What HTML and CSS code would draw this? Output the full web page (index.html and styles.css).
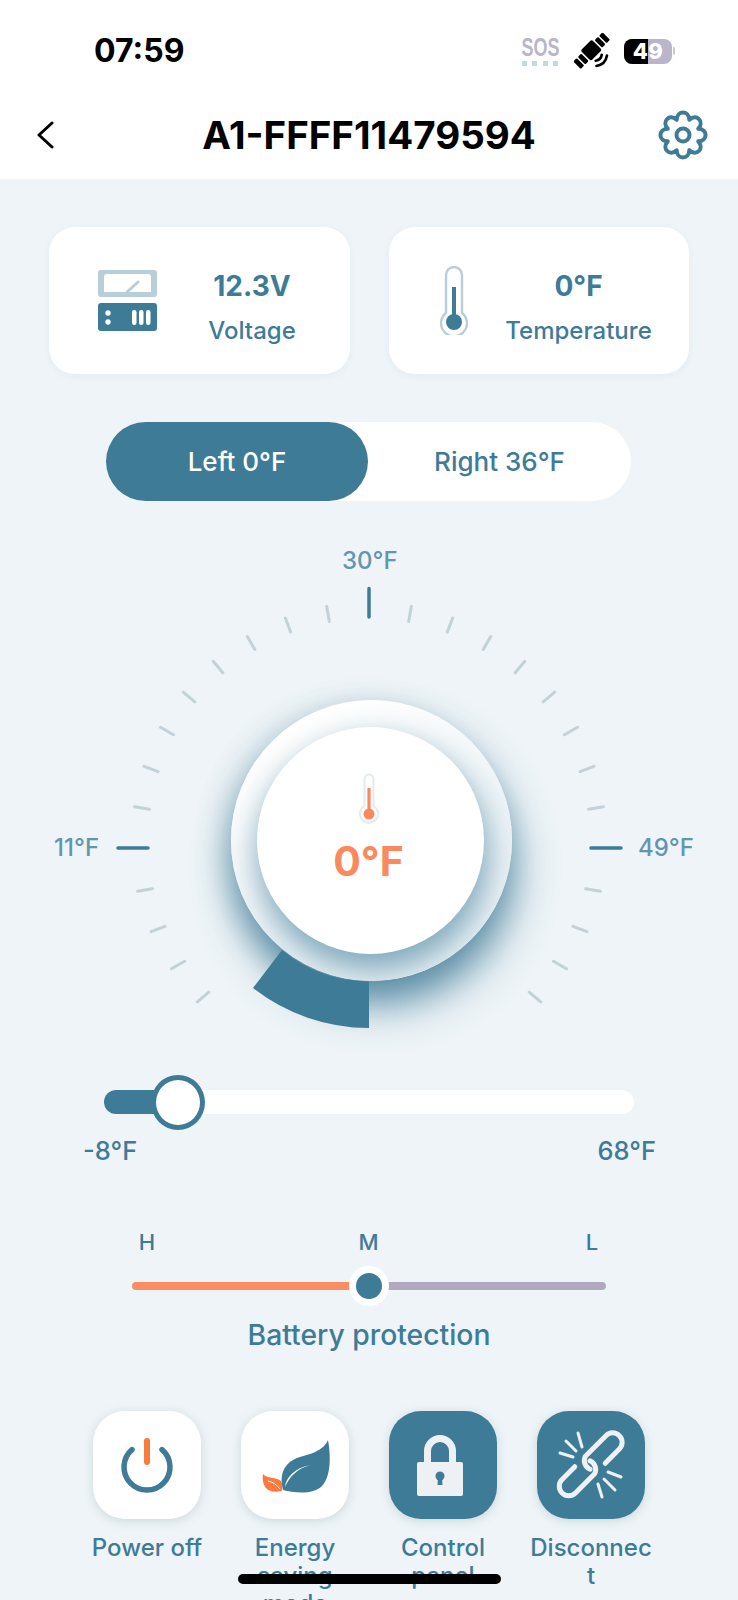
FILE: index.html
```html
<!DOCTYPE html>
<html lang="en">
<head>
<meta charset="utf-8">
<title>A1-FFFF11479594</title>
<link rel="stylesheet" href="styles.css">
</head>
<body>
<div class="screen">
  <header class="header">
    <div class="status">
      <span class="time">07:59</span>
      <div class="status-right">
        <div class="sos">
          <span class="sos-text">SOS</span>
          <div class="sos-dots"><i></i><i></i><i></i><i></i></div>
        </div>
        <svg class="sat" viewBox="-17 -17 34 34" width="36" height="36">
          <g transform="rotate(-45)">
            <rect x="-7.500" y="-8" width="15" height="14" rx="2"/>
            <rect x="9" y="-5.500" width="4.500" height="10" rx="1"/>
            <rect x="15" y="-5.500" width="4.500" height="10" rx="1"/>
            <rect x="-13.500" y="-5.500" width="4.500" height="10" rx="1"/>
            <rect x="-19.500" y="-5.500" width="4.500" height="10" rx="1"/>
            <path class="sat-wave" d="M-4 9Q0 12 4 9M-7 13Q0 18 7 13"/>
          </g>
        </svg>
        <div class="battery">
          <div class="battery-body"><span class="battery-fill"></span><span class="battery-num">49</span></div>
          <span class="battery-nub"></span>
        </div>
      </div>
    </div>
    <nav class="nav">
      <svg class="back" viewBox="0 0 18 28" width="18" height="28"><path d="M16 2L3 14L16 26"/></svg>
      <h1 class="title">A1-FFFF11479594</h1>
      <svg class="gear" viewBox="-25 -25 50 50" width="50" height="50">
        <path d="M-6.310 -15.240C-6 -25 6 -25 6.310 -15.240C13.400 -21.900 21.900 -13.400 15.240 -6.310C25 -6 25 6 15.240 6.310C21.900 13.400 13.400 21.900 6.310 15.240C6 25 -6 25 -6.310 15.240C-13.400 21.900 -21.900 13.400 -15.240 6.310C-25 6 -25 -6 -15.240 -6.310C-21.900 -13.400 -13.400 -21.900 -6.310 -15.240Z"/>
        <circle r="6.500"/>
      </svg>
    </nav>
  </header>

  <main class="main">
    <section class="cards">
      <div class="card card-volt">
        <svg viewBox="0 0 59 61" width="59" height="61">
          <rect class="pale" width="59" height="27" rx="3"/>
          <path class="window" d="M9 4H50Q53 4 53 7V22H6V7Q6 4 9 4Z"/>
          <path class="needle" d="M29 22L40 12"/>
          <rect class="ink" y="33" width="59" height="28" rx="3"/>
          <circle class="window" cx="10" cy="43" r="2.700"/>
          <circle class="window" cx="10" cy="52" r="2.700"/>
          <rect class="window" x="34" y="40" width="4.500" height="15" rx="2.200"/>
          <rect class="window" x="41" y="40" width="4.500" height="15" rx="2.200"/>
          <rect class="window" x="48" y="40" width="4.500" height="15" rx="2.200"/>
        </svg>
        <div class="card-text"><b class="value">12.3V</b><span class="label">Voltage</span></div>
      </div>
      <div class="card card-temp">
        <svg viewBox="0 0 28 69" width="28" height="69">
          <path class="tube" d="M6 47V9A8 8 0 0 1 22 9V47A13 13 0 1 1 6 47Z"/>
          <rect class="ink" x="12" y="21" width="4" height="35"/>
          <circle class="ink" cx="14" cy="56" r="8"/>
        </svg>
        <div class="card-text"><b class="value">0°F</b><span class="label">Temperature</span></div>
      </div>
    </section>

    <div class="toggle">
      <span class="toggle-item toggle-on">Left 0°F</span>
      <span class="toggle-item">Right 36°F</span>
    </div>

    <section class="dial">
      <svg class="dial-svg" viewBox="0 520 738 540" width="738" height="540">
        <g id="ticks">
          <path class="tick" d="M326.7 606.6L329.3 621.4M285.4 618L290.6 632M247.3 636.5L254.8 649.5M213.2 661.3L222.8 672.8M183.3 692.2L194.8 701.8M160.5 727.3L173.5 734.8M144 766.4L158 771.6M134.6 806.7L149.4 809.3M137.6 891.3L152.4 888.7M151 931.6L165 926.4M171.5 968.8L184.5 961.3M197.3 1001.8L208.8 992.200"/>
        </g>
        <use href="#ticks" transform="translate(738 0) scale(-1 1)"/>
        <path class="tick-major" d="M369 588.500V617M118 848H148M591 848H621"/>
      </svg>
      <span class="dial-label dial-top">30°F</span>
      <span class="dial-label dial-left">11°F</span>
      <span class="dial-label dial-right">49°F</span>
      <div class="knob">
        <div class="knob-inner">
          <svg class="knob-therm" viewBox="0 0 20 52" width="20" height="52">
            <path class="tube-light" d="M5.500 33V6A4.500 4.500 0 0 1 14.500 6V33A9 9 0 1 1 5.500 33Z"/>
            <rect class="hot" x="8.400" y="15" width="3.200" height="26"/>
            <circle class="hot" cx="10" cy="41" r="5.500"/>
          </svg>
          <span class="knob-value">0°F</span>
        </div>
      </div>
      <svg class="dial-arc" viewBox="0 520 738 540" width="738" height="540">
        <path class="ink" d="M369 1028A188 188 0 0 1 253 988L282 950A141 141 0 0 0 369 981.500Z"/>
      </svg>
    </section>

    <div class="range">
      <div class="range-fill"></div>
      <div class="range-thumb"></div>
    </div>
    <div class="range-labels"><span>-8°F</span><span>68°F</span></div>

    <div class="level-labels"><span>H</span><span>M</span><span>L</span></div>
    <div class="level">
      <span class="level-hot"></span>
      <span class="level-cool"></span>
      <span class="level-thumb"></span>
    </div>
    <div class="level-title">Battery protection</div>

    <section class="actions">
      <div class="action">
        <div class="action-btn">
          <svg viewBox="0 0 108 108" width="108" height="108">
            <path class="power-ring" d="M39 38.600A23 23 0 1 0 69 38.600"/>
            <path class="power-bar" d="M54 30V51"/>
          </svg>
        </div>
        <span class="action-label">Power off</span>
      </div>
      <div class="action">
        <div class="action-btn">
          <svg viewBox="0 0 108 108" width="108" height="108">
            <path class="ink" d="M42 79C38 64 43 54 52 49C62 43 80 44 87 29C90 45 90 66 81 75C72 84 54 82 42 79Z"/>
            <path class="window" d="M44 76C45 66 54 57 69 54C56 58 49 65 44 76Z"/>
            <path class="hot-deep" d="M22 63C26 68 36 66 40 70C42 73 41 78 41 80C33 82 27 80 24 76C22 72 21 68 22 63Z"/>
            <path class="window-thin" d="M27 70C32 71 36 74 39 78"/>
          </svg>
        </div>
        <span class="action-label">Energy saving mode</span>
      </div>
      <div class="action">
        <div class="action-btn action-on">
          <svg viewBox="0 0 108 108" width="108" height="108">
            <path class="shackle" d="M38.500 54V40A12.500 12.500 0 0 1 63.500 40V54"/>
            <rect class="frost" x="28" y="51" width="46" height="34" rx="2"/>
            <circle class="ink" cx="51" cy="65" r="4.500"/>
            <path class="ink" d="M49 66L48.500 74H53.500L53 66Z"/>
          </svg>
        </div>
        <span class="action-label">Control panel</span>
      </div>
      <div class="action">
        <div class="action-btn action-on">
          <svg viewBox="537 1411 108 108" width="108" height="108">
            <g transform="translate(590 1465) rotate(-45)">
              <path class="chain" d="M12 9.500H32A9.500 9.500 0 0 0 32 -9.500H3A9.500 9.500 0 0 0 -3 3"/>
              <path class="chain" d="M-12 -9.500H-30A9.500 9.500 0 0 0 -30 9.500H-3A9.500 9.500 0 0 0 3 -3"/>
            </g>
            <path class="spark" d="M560 1453L573 1457M566 1441L576 1451M578 1433L582 1447M608 1472L621 1477M604 1479L615 1490M598 1484L602 1497"/>
          </svg>
        </div>
        <span class="action-label">Disconnect</span>
      </div>
    </section>
  </main>
  <div class="home-bar"></div>
</div>
</body>
</html>
```

FILE: styles.css
```css
* { box-sizing: border-box; }
html, body { margin: 0; padding: 0; height: 1600px; overflow: hidden; }
body { background: #eef4f7; color: #3e7b97; font-family: Inter, "Noto Sans", sans-serif; font-weight: 500; }
.screen { position: relative; width: 738px; height: 1600px; overflow: hidden; }
svg { display: block; }

/* header */
.header { background: #fff; height: 179px; }
.status { height: 94px; padding: 8px 63px 0 94px; display: flex; align-items: center; justify-content: space-between; }
.time { color: #000; font-size: 32px; font-weight: 700; line-height: 36px; }
.status-right { display: flex; align-items: center; width: 155px; }
.sos { width: 40px; margin-right: 14px; display: flex; flex-direction: column; align-items: center; }
.sos-text { font-family: "Liberation Sans", sans-serif; font-size: 25px; line-height: 22px; font-weight: 700; color: #b9b6ca; transform: scaleX(.72); }
.sos-dots { display: flex; gap: 5.500px; margin-top: 3px; }
.sos-dots i { width: 5px; height: 5px; background: #c4d8df; }
.sat { margin-right: 14px; fill: #000; }
.sat-wave { fill: none; stroke: #000; stroke-width: 2.500; stroke-linecap: round; }
.battery { display: flex; align-items: center; }
.battery-body { position: relative; width: 48px; height: 25px; border-radius: 8px; background: #b9b6ca; overflow: hidden; display: flex; align-items: center; justify-content: center; }
.battery-fill { position: absolute; left: 0; top: 0; bottom: 0; width: 24px; background: #000; }
.battery-num { position: relative; color: #fff; font-size: 22px; font-weight: 800; line-height: 25px; letter-spacing: 0.500px; }
.battery-nub { width: 2px; height: 8px; margin-left: 1px; border-radius: 0 2px 2px 0; background: #c9c6d6; }

.nav { height: 80px; padding: 2px 30px 0 36px; display: flex; align-items: center; justify-content: space-between; position: relative; }
.back path { fill: none; stroke: #000; stroke-width: 3; stroke-linecap: round; stroke-linejoin: round; }
.title { margin: 0; position: absolute; left: 0; right: 0; text-align: center; color: #000; font-size: 38.500px; line-height: 44px; font-weight: 700; }
.gear { fill: none; stroke: #3e7b97; stroke-width: 4; stroke-linejoin: round; }

/* cards */
.cards { display: flex; gap: 39px; padding: 48px 49px 0; }
.card { width: 300.500px; height: 147px; border-radius: 26px; background: #fff; display: flex; align-items: center; box-shadow: 0 2px 6px rgba(190, 210, 220, .18); }
.card-volt { padding-left: 49px; gap: 15px; }
.card-temp { padding-left: 51px; gap: 31px; }
.card-text { width: 160px; padding-top: 16px; display: flex; flex-direction: column; align-items: center; gap: 11px; }
.value { font-size: 28px; line-height: 34px; font-weight: 700; }
.label { font-size: 24px; line-height: 34px; }
.pale { fill: #b8ced8; }
.window { fill: #fff; }
.needle { stroke: #b8ced8; stroke-width: 3; fill: none; stroke-linecap: round; }
.ink { fill: #3e7b97; }
.tube { fill: #fff; stroke: #b8ced8; stroke-width: 2.400; }

/* toggle */
.toggle { margin: 48px 107px 0 106px; height: 79px; border-radius: 40px; background: #fff; display: flex; font-size: 26px; }
.toggle-item { flex: 1; display: flex; align-items: center; justify-content: center; border-radius: 40px; }
.toggle-on { flex: 0 0 262px; background: #3e7b97; color: #fff; }

/* dial: a free canvas of ticks round the knob */
.dial { position: relative; margin-top: 19px; height: 540px; }
.dial-svg, .dial-arc { position: absolute; left: 0; top: 0; }
.tick { fill: none; stroke: #c3d2d9; stroke-width: 3; stroke-linecap: round; }
.tick-major { fill: none; stroke: #3e7b97; stroke-width: 3.500; stroke-linecap: round; }
.dial-label { position: absolute; color: #6396ae; font-size: 24px; line-height: 28px; }
.dial-top { left: 342px; top: 27px; }
.dial-left { left: 54px; top: 314px; }
.dial-right { left: 638px; top: 314px; }
.knob { position: absolute; left: 231px; top: 180px; width: 281px; height: 281px; border-radius: 50%; background: linear-gradient(150deg, #fff 15%, #eef4f7 60%, #e6eff3 100%); box-shadow: 4px 26px 40px -2px rgba(62, 123, 151, .8), -7px 8px 30px -2px rgba(62, 123, 151, .38); overflow: hidden; }
.knob-inner { position: absolute; left: 26px; top: 27px; width: 227px; height: 227px; border-radius: 50%; background: #fff; box-shadow: 2px 14px 30px 2px rgba(62, 123, 151, .62); display: flex; flex-direction: column; align-items: center; padding: 46px 4px 0 0; }
.knob-value { margin-top: 12px; font-size: 41px; line-height: 48px; font-weight: 700; color: #fa8a5e; }
.tube-light { fill: #fff; stroke: #e3ebef; stroke-width: 2; }
.hot { fill: #fa8a5e; }

/* temperature range */
.range { position: relative; margin: 30px 104px 0; height: 24px; border-radius: 12px; background: #fff; }
.range-fill { width: 73px; height: 24px; border-radius: 12px 0 0 12px; background: #3e7b97; }
.range-thumb { position: absolute; left: 47px; top: -15px; width: 54px; height: 55px; border-radius: 50%; background: #fff; border: 5px solid #3e7b97; }
.range-labels { margin-top: 23px; padding: 0 82px 0 83px; display: flex; justify-content: space-between; font-size: 25.500px; line-height: 28px; }

/* battery protection */
.level-labels { margin: 63px 126px 0 127px; display: flex; justify-content: space-between; font-size: 22px; line-height: 28px; }
.level-labels span { width: 40px; text-align: center; }
.level-labels span:nth-child(2) { margin-left: -2px; }
.level { position: relative; margin: 26px 132px 0; height: 8px; display: flex; }
.level-hot { width: 50%; border-radius: 4px 0 0 4px; background: #fb8d65; }
.level-cool { width: 50%; border-radius: 0 4px 4px 0; background: #b2a9c0; }
.level-thumb { position: absolute; left: 217px; top: -16px; width: 40px; height: 40px; border-radius: 50%; background: #3e7b97; border: 7.500px solid #fff; }
.level-title { margin-top: 29px; text-align: center; font-size: 28.300px; line-height: 32px; font-weight: 500; }

/* actions */
.actions { margin-top: 60px; padding-left: 85px; display: flex; gap: 24px; }
.action { width: 124px; display: flex; flex-direction: column; align-items: center; }
.action-btn { width: 108px; height: 108px; border-radius: 32px; background: #fff; box-shadow: 0 2px 10px rgba(140, 165, 180, .35); }
.action-on { background: #3e7b97; }
.action-label { margin-top: 15px; width: 124px; text-align: center; font-size: 24px; line-height: 28px; overflow-wrap: anywhere; }
.power-ring { fill: none; stroke: #3e7b97; stroke-width: 5.500; stroke-linecap: round; }
.power-bar { fill: none; stroke: #fb7a3e; stroke-width: 6; stroke-linecap: round; }
.hot-deep { fill: #fb7a3e; }
.window-thin { fill: none; stroke: #fff; stroke-width: 1; }
.shackle { fill: none; stroke: #eef1f4; stroke-width: 7; }
.frost { fill: #eef1f4; }
.chain { fill: none; stroke: #eef1f4; stroke-width: 5; stroke-linecap: round; }
.spark { fill: none; stroke: #eef1f4; stroke-width: 3; stroke-linecap: round; }

.home-bar { position: absolute; left: 238px; top: 1574px; width: 263px; height: 10px; border-radius: 5px; background: #000; }
```
